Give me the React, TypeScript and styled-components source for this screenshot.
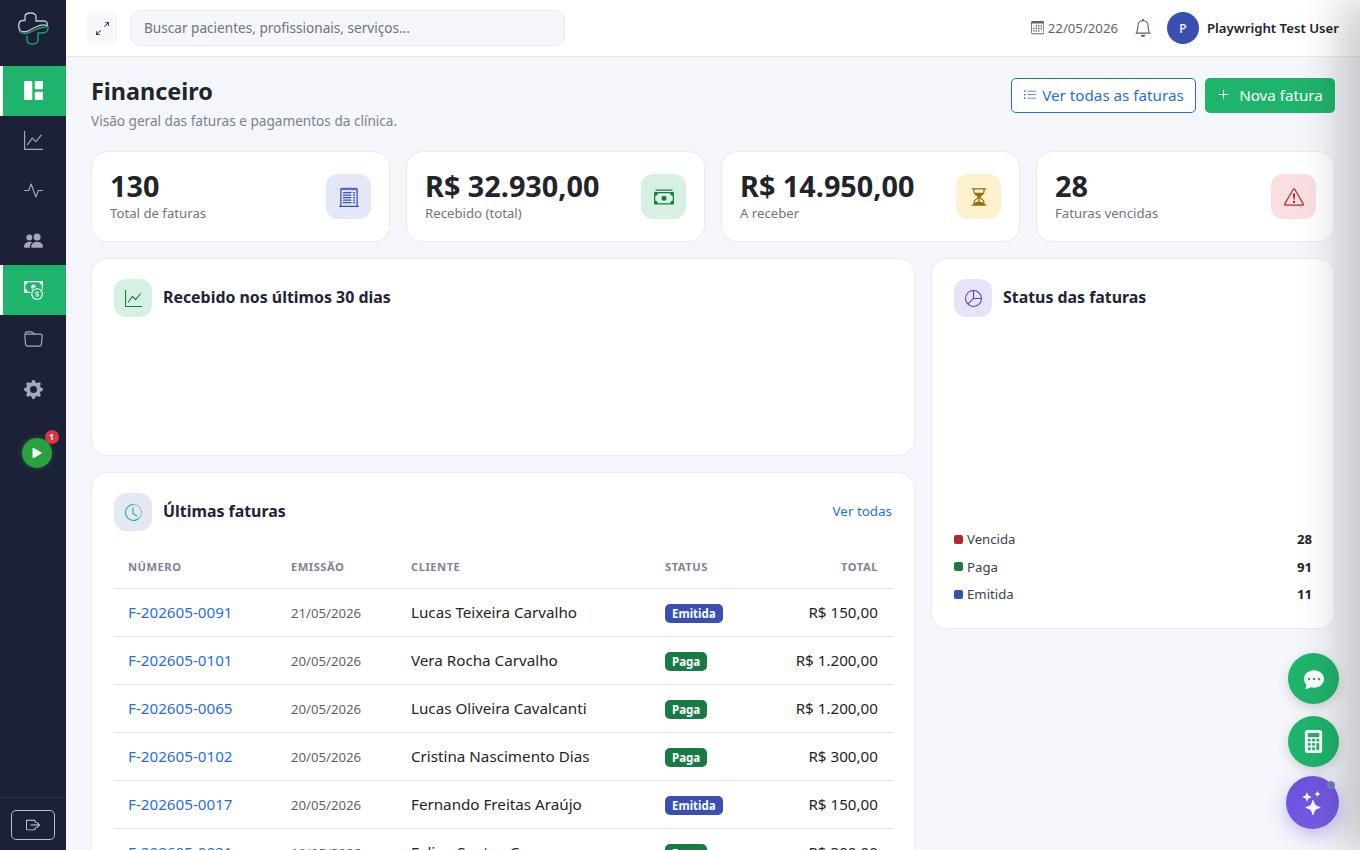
import React from "react";
import styled, { createGlobalStyle } from "styled-components";
import {
  BsGrid1X2Fill, BsGraphUp, BsActivity, BsPeopleFill, BsCashCoin, BsFolder, BsGearFill, BsPlayFill,
  BsArrowsAngleExpand, BsCalendar3, BsBell, BsListUl, BsPlusLg, BsReceiptCutoff, BsCashStack,
  BsHourglassSplit, BsExclamationTriangle, BsPieChart, BsClockHistory, BsChatDotsFill,
  BsCalculatorFill, BsStars, BsBoxArrowRight,
} from "react-icons/bs";

const Global = createGlobalStyle`
  * { box-sizing: border-box; }
  html, body { margin: 0; padding: 0; height: 100%; overflow: hidden; }
  body { font-family: "Noto Sans", "Open Sans", sans-serif; background: #f4f6fb; color: #212529; }
`;

const Shell = styled.div`display: flex; height: 850px; overflow: hidden;`;
const Sidebar = styled.aside`width: 66px; flex: none; background: #1b2137; display: flex; flex-direction: column;`;
const LogoBox = styled.div`height: 66px; padding-top: 12px; display: flex; justify-content: center; align-items: flex-start;`;
const Nav = styled.nav`display: flex; flex-direction: column; flex: 1;`;
const NavItem = styled.a<{ $active?: boolean }>`
  height: 49.8px; display: flex; align-items: center; justify-content: center; font-size: 19px;
  color: ${(p) => (p.$active ? "#fff" : "#a3a9bd")};
  background: ${(p) => (p.$active ? "#1fb46c" : "transparent")};
  box-shadow: ${(p) => (p.$active ? "inset 3px 0 0 #fff" : "none")};
`;
const PlayWrap = styled.div`height: 80px; display: flex; align-items: center; justify-content: center; margin-left: 7px; margin-top: -2px;`;
const Play = styled.div`
  position: relative; width: 30px; height: 30px; border-radius: 50%; background: #2ba03f;
  color: #fff; display: flex; align-items: center; justify-content: center; font-size: 18px;
  box-shadow: 0 0 6px rgba(40,160,60,.4);
`;
const PlayBadge = styled.span`
  position: absolute; top: -8px; right: -7px; width: 14px; height: 14px; border-radius: 50%;
  background: #dc3545; color: #fff; font-size: 9px; font-weight: 700; display: flex; align-items: center; justify-content: center;
`;
const SideFoot = styled.div`height: 53px; border-top: 1px solid #2a3147; display: flex; justify-content: center; padding-top: 12px;`;
const LogoutBtn = styled.button`
  width: 44px; height: 30px; background: transparent; border: 1px solid #b8bdca; border-radius: 5px; color: #d8dbe4;
  display: flex; align-items: center; justify-content: center; font-size: 14px; padding: 0;
`;

const Column = styled.div`flex: 1; min-width: 0; display: flex; flex-direction: column;`;
const Topbar = styled.header`
  height: 57px; flex: none; background: #fff; border-bottom: 1px solid #e6e8ef; display: flex; align-items: center; padding: 0 21px;
`;
const ExpandBtn = styled.button`
  width: 30px; height: 30px; border: 0; border-radius: 5px; background: #f7f8fb; color: #212529; margin-right: 13px;
  display: flex; align-items: center; justify-content: center; font-size: 13px; padding: 0;
`;
const Search = styled.div`
  width: 435px; height: 36px; background: #f4f6fb; border: 1px solid #e6e8ef; border-radius: 10px;
  padding: 0 13px 1px; display: flex; align-items: center; font-size: 13.6px; color: #6c757d;
`;
const TopRight = styled.div`margin-left: auto; display: flex; align-items: center;`;
const DateText = styled.span`display: flex; align-items: center; gap: 4px; font-size: 13.2px; color: #5c6470; margin-right: 16px;`;
const BellWrap = styled.span`display: flex; font-size: 18px; color: #5c6470; margin-right: 15px;`;
const Avatar = styled.div`
  width: 32px; height: 32px; border-radius: 50%; background: #3a4fb2; color: #fff; font-size: 12px; font-weight: 500;
  display: flex; align-items: center; justify-content: center; margin-right: 8px;
`;
const UserName = styled.span`font-size: 13.2px; font-weight: 600; color: #212529;`;

const Main = styled.main`flex: 1; padding: 20px 25px 0; overflow: hidden;`;
const PageHead = styled.div`display: flex; justify-content: space-between; align-items: flex-start; height: 74px;`;
const Title = styled.h1`margin: 0; font-size: 23.4px; line-height: 29px; font-weight: 700; color: #212529;`;
const Sub = styled.p`margin: 6px 0 0; font-size: 13.6px; line-height: 18px; color: #7a8290;`;
const Actions = styled.div`display: flex; gap: 9px; margin-top: 1px;`;
const OutlineBtn = styled.button`
  height: 35px; width: 185px; border: 1px solid #1f6fe0; border-radius: 5px; background: #fff; color: #1f6fe0;
  font: 400 15.2px "Noto Sans", sans-serif; display: flex; align-items: center; justify-content: center; gap: 5px; padding: 0 0 2px;
  svg { font-size: 14px; }
`;
const SolidBtn = styled.button`
  height: 35px; width: 130px; border: 0; border-radius: 5px; background: #1fb46c; color: #fff;
  font: 400 15.2px "Noto Sans", sans-serif; display: flex; align-items: center; justify-content: center; gap: 9px; padding: 0 0 2px;
  svg { font-size: 13px; }
`;

const Stats = styled.section`display: grid; grid-template-columns: repeat(4, minmax(0, 1fr)); gap: 16px;`;
const Card = styled.div`background: #fff; border: 1px solid #e9ebf2; border-radius: 16px;`;
const StatCard = styled(Card)`height: 91px; padding: 0 18px; display: flex; align-items: center; justify-content: space-between;`;
const StatValue = styled.div`font-size: 28.8px; line-height: 31px; font-weight: 700; color: #212529; margin: -1px 0 2.5px;`;
const StatLabel = styled.div`font-size: 13.2px; line-height: 18px; color: #6c757d;`;
const IconTile = styled.div<{ $bg: string; $fg: string; $size?: number; $font?: number }>`
  width: ${(p) => p.$size ?? 45}px; height: ${(p) => p.$size ?? 45}px; border-radius: 12px; flex: none;
  background: ${(p) => p.$bg}; color: ${(p) => p.$fg}; font-size: ${(p) => p.$font ?? 20}px;
  display: flex; align-items: center; justify-content: center;
`;

const Grid = styled.section`
  display: grid; grid-template-columns: minmax(0, 824fr) minmax(0, 404fr); gap: 16px; margin-top: 16px; align-items: start;
`;
const LeftCol = styled.div`display: flex; flex-direction: column; gap: 16px;`;
const ChartCard = styled(Card)`height: 198px; padding: 20px 22px;`;
const CardHead = styled.div`display: flex; align-items: center; gap: 11px; height: 38px;`;
const CardTitle = styled.h2`margin: 0 0 2px; font-size: 15.9px; font-weight: 700; color: #1e2435;`;
const MoreLink = styled.a`margin: 0 0 2px auto; font-size: 13.4px; color: #1f6fe0;`;
const TableCard = styled(Card)`padding: 20px 22px 0;`;
const Table = styled.table`width: 100%; border-collapse: collapse; table-layout: fixed; margin-top: 14px;`;
const Th = styled.th<{ $right?: boolean }>`
  height: 43px; padding: 0 14px; font-size: 11.2px; font-weight: 700; letter-spacing: .5px; color: #7d8496; text-transform: uppercase;
  text-align: ${(p) => (p.$right ? "right" : "left")}; border-bottom: 1px solid #dfe2e8;
`;
const Td = styled.td<{ $right?: boolean }>`
  height: 48px; padding: 0 14px; font-size: 15.2px; color: #212529; text-align: ${(p) => (p.$right ? "right" : "left")};
  border-bottom: 1px solid #dfe2e8; white-space: nowrap; overflow: hidden;
`;
const Num = styled.a`color: #1f6fe0;`;
const DateCell = styled.span`font-size: 13.2px; color: #5c6470;`;
const Badge = styled.span<{ $bg: string }>`
  display: inline-block; padding: 0 7px; height: 19px; line-height: 19px; border-radius: 5px; background: ${(p) => p.$bg};
  color: #fff; font-size: 11.5px; font-weight: 700; vertical-align: middle;
`;
const StatusCard = styled(Card)`height: 371px; padding: 20px 22px; display: flex; flex-direction: column;`;
const Legend = styled.div`margin-top: auto; display: flex; flex-direction: column;`;
const LegendRow = styled.div`height: 27.5px; display: flex; align-items: center; font-size: 13.2px; color: #3b414c;`;
const Swatch = styled.i<{ $c: string }>`width: 9px; height: 9px; border-radius: 2px; background: ${(p) => p.$c}; margin-right: 4px;`;
const LegendVal = styled.b`margin-left: auto; font-weight: 700; color: #212529;`;

const Fabs = styled.div`position: fixed; right: 21px; bottom: 21px; display: flex; flex-direction: column; align-items: flex-end; gap: 12px;`;
const Fab = styled.button`
  width: 51px; height: 51px; border-radius: 50%; border: 0; background: #1fb46c; color: #fff; font-size: 20px; padding: 0;
  display: flex; align-items: center; justify-content: center; box-shadow: 0 4px 12px rgba(0,0,0,.15);
`;
const CalcFab = styled(Fab)`font-size: 23px;`;
const AiFab = styled(Fab)`
  position: relative; width: 53px; height: 53px; font-size: 24px; background: linear-gradient(135deg, #6a4fdc, #7c5fe8);
  box-shadow: 0 6px 18px rgba(110,80,230,.35); margin-top: -3px;
`;
const AiDot = styled.span`
  position: absolute; top: 5px; right: 4px; width: 8px; height: 8px; border-radius: 50%; background: #5a87b8; border: 1px solid #8d78e8;
`;
const EdgeShadow = styled.div`
  position: fixed; top: 0; bottom: 0; left: 100%; width: 300px; box-shadow: -20px 0 40px rgba(0,0,0,.2); pointer-events: none;
`;

const Logo = () => (
  <svg width="31" height="33" viewBox="0 0 31 33" fill="none" strokeWidth="1.3" strokeLinecap="round" strokeLinejoin="round">
    <path d="M3 19C10 22 15 15 22 13.300c3-.7 6-.8 7 .7C30 11 28.500 9 26 9h-8V4.500C18 2 15.500 1 12.500 1S7 2 7 4.500V8.500H4.500C2 8.500.7 11 .7 14S2 18.500 3 19Z" stroke="#c8ccd8" />
    <path d="M1.500 19.500C8 25 15.500 17.500 22 16c3.500-.8 6.500-1 8-1.500C30.500 19 28 21 25 21h-5v7c0 3-2.500 4-5.500 4S9 31 9 28v-4" stroke="#1fa866" />
  </svg>
);

const rows: [string, string, string, "Emitida" | "Paga", string][] = [
  ["F-202605-0091", "21/05/2026", "Lucas Teixeira Carvalho", "Emitida", "R$ 150,00"],
  ["F-202605-0101", "20/05/2026", "Vera Rocha Carvalho", "Paga", "R$ 1.200,00"],
  ["F-202605-0065", "20/05/2026", "Lucas Oliveira Cavalcanti", "Paga", "R$ 1.200,00"],
  ["F-202605-0102", "20/05/2026", "Cristina Nascimento Dias", "Paga", "R$ 300,00"],
  ["F-202605-0017", "20/05/2026", "Fernando Freitas Araújo", "Emitida", "R$ 150,00"],
  ["F-202605-0021", "19/05/2026", "Felipe Santos Gomes", "Paga", "R$ 300,00"],
];

const stats = [
  { v: "130", l: "Total de faturas", bg: "#e4e8f6", fg: "#3a4fb2", I: BsReceiptCutoff },
  { v: "R$ 32.930,00", l: "Recebido (total)", bg: "#d6f1e2", fg: "#157a45", I: BsCashStack },
  { v: "R$ 14.950,00", l: "A receber", bg: "#fdf1cf", fg: "#94700c", I: BsHourglassSplit },
  { v: "28", l: "Faturas vencidas", bg: "#fbdfe0", fg: "#b02a37", I: BsExclamationTriangle },
];

export default function App() {
  return (
    <Shell>
      <Global />
      <Sidebar>
        <LogoBox><Logo /></LogoBox>
        <Nav>
          <NavItem $active><BsGrid1X2Fill /></NavItem>
          <NavItem><BsGraphUp /></NavItem>
          <NavItem><BsActivity /></NavItem>
          <NavItem><BsPeopleFill /></NavItem>
          <NavItem $active><BsCashCoin /></NavItem>
          <NavItem><BsFolder /></NavItem>
          <NavItem><BsGearFill /></NavItem>
          <PlayWrap>
            <Play><BsPlayFill /><PlayBadge>1</PlayBadge></Play>
          </PlayWrap>
        </Nav>
        <SideFoot><LogoutBtn aria-label="Sair"><BsBoxArrowRight /></LogoutBtn></SideFoot>
      </Sidebar>
      <Column>
        <Topbar>
          <ExpandBtn aria-label="Expandir"><BsArrowsAngleExpand /></ExpandBtn>
          <Search>Buscar pacientes, profissionais, serviços...</Search>
          <TopRight>
            <DateText><BsCalendar3 />22/05/2026</DateText>
            <BellWrap><BsBell /></BellWrap>
            <Avatar>P</Avatar>
            <UserName>Playwright Test User</UserName>
          </TopRight>
        </Topbar>
        <Main>
          <PageHead>
            <div>
              <Title>Financeiro</Title>
              <Sub>Visão geral das faturas e pagamentos da clínica.</Sub>
            </div>
            <Actions>
              <OutlineBtn><BsListUl />Ver todas as faturas</OutlineBtn>
              <SolidBtn><BsPlusLg />Nova fatura</SolidBtn>
            </Actions>
          </PageHead>
          <Stats>
            {stats.map(({ v, l, bg, fg, I }) => (
              <StatCard key={l}>
                <div>
                  <StatValue>{v}</StatValue>
                  <StatLabel>{l}</StatLabel>
                </div>
                <IconTile $bg={bg} $fg={fg}><I /></IconTile>
              </StatCard>
            ))}
          </Stats>
          <Grid>
            <LeftCol>
              <ChartCard>
                <CardHead>
                  <IconTile $bg="#d6f1e2" $fg="#157a45" $size={38} $font={17}><BsGraphUp /></IconTile>
                  <CardTitle>Recebido nos últimos 30 dias</CardTitle>
                </CardHead>
              </ChartCard>
              <TableCard>
                <CardHead>
                  <IconTile $bg="#e4e8f6" $fg="#1fb46c" $size={38} $font={17}><BsClockHistory /></IconTile>
                  <CardTitle>Últimas faturas</CardTitle>
                  <MoreLink>Ver todas</MoreLink>
                </CardHead>
                <Table>
                  <colgroup>
                    <col style={{ width: 163 }} />
                    <col style={{ width: 120 }} />
                    <col style={{ width: 254 }} />
                    <col style={{ width: 110 }} />
                    <col />
                  </colgroup>
                  <thead>
                    <tr>
                      <Th>Número</Th>
                      <Th>Emissão</Th>
                      <Th>Cliente</Th>
                      <Th>Status</Th>
                      <Th $right>Total</Th>
                    </tr>
                  </thead>
                  <tbody>
                    {rows.map((r) => (
                      <tr key={r[0]}>
                        <Td><Num>{r[0]}</Num></Td>
                        <Td><DateCell>{r[1]}</DateCell></Td>
                        <Td>{r[2]}</Td>
                        <Td><Badge $bg={r[3] === "Paga" ? "#1a7a45" : "#3a4fb2"}>{r[3]}</Badge></Td>
                        <Td $right>{r[4]}</Td>
                      </tr>
                    ))}
                  </tbody>
                </Table>
              </TableCard>
            </LeftCol>
            <StatusCard>
              <CardHead>
                <IconTile $bg="#e9e3f9" $fg="#5a3fb5" $size={38} $font={17}><BsPieChart /></IconTile>
                <CardTitle>Status das faturas</CardTitle>
              </CardHead>
              <Legend>
                <LegendRow><Swatch $c="#b02a2a" />Vencida<LegendVal>28</LegendVal></LegendRow>
                <LegendRow><Swatch $c="#1a7a45" />Paga<LegendVal>91</LegendVal></LegendRow>
                <LegendRow><Swatch $c="#3a4fb2" />Emitida<LegendVal>11</LegendVal></LegendRow>
              </Legend>
            </StatusCard>
          </Grid>
        </Main>
      </Column>
      <Fabs>
        <Fab aria-label="Chat"><BsChatDotsFill /></Fab>
        <CalcFab aria-label="Calculadora"><BsCalculatorFill /></CalcFab>
        <AiFab aria-label="Assistente"><BsStars /><AiDot /></AiFab>
      </Fabs>
      <EdgeShadow />
    </Shell>
  );
}
